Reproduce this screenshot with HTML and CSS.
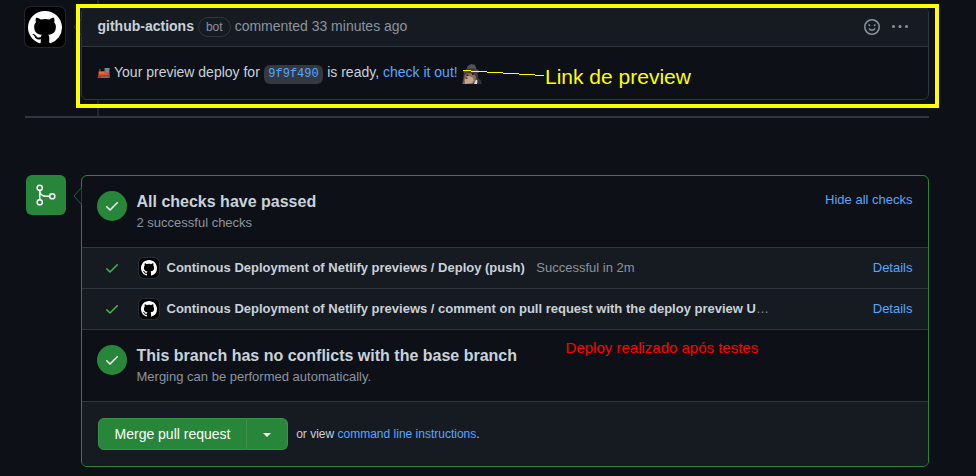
FILE: index.html
```html
<!DOCTYPE html>
<html lang="en">
<head>
<meta charset="utf-8">
<title>Pull request</title>
<link rel="stylesheet" href="styles.css">
</head>
<body>
<svg class="defs" width="0" height="0">
  <symbol id="mark" viewBox="0 0 16 16"><path fill="#fff" d="M8 0C3.58 0 0 3.58 0 8c0 3.54 2.29 6.53 5.47 7.59.4.07.55-.17.55-.38 0-.19-.01-.82-.01-1.49-2.01.37-2.53-.49-2.69-.94-.09-.23-.48-.94-.82-1.13-.28-.15-.68-.52-.01-.53.63-.01 1.08.58 1.23.82.72 1.21 1.87.87 2.33.66.07-.52.28-.87.51-1.07-1.78-.2-3.64-.89-3.64-3.95 0-.87.31-1.59.82-2.15-.08-.2-.36-1.02.08-2.12 0 0 .67-.21 2.2.82.64-.18 1.32-.27 2-.27.68 0 1.36.09 2 .27 1.53-1.04 2.2-.82 2.2-.82.44 1.1.16 1.92.08 2.12.51.56.82 1.27.82 2.15 0 3.07-1.87 3.75-3.65 3.95.29.25.54.73.54 1.48 0 1.07-.01 1.93-.01 2.2 0 .21.15.46.55.38A8.013 8.013 0 0016 8c0-4.42-3.58-8-8-8z"/></symbol>
  <symbol id="check" viewBox="0 0 16 16"><path fill="currentColor" d="M13.78 4.22a.75.75 0 010 1.06l-7.25 7.25a.75.75 0 01-1.06 0L2.22 9.28a.75.75 0 011.06-1.06L6 10.94l6.72-6.72a.75.75 0 011.06 0z"/></symbol>
</svg>
<main class="page">
  <section class="timeline">
    <div class="avatar"><svg width="34" height="33" viewBox="0 0 16 16" preserveAspectRatio="none"><use href="#mark" width="16" height="16"/></svg></div>
    <article class="comment">
      <svg class="caret caret-gray" width="9" height="18" viewBox="0 0 9 18"><path d="M8.500 .5L1 9l7.500 8.500" /></svg>
      <header class="comment-head">
        <strong class="author">github-actions</strong>
        <span class="bot">bot</span>
        <span class="when">commented 33 minutes ago</span>
        <svg class="smile" width="16" height="16" viewBox="0 0 16 16" fill="none" stroke="#8b949e" stroke-width="1.500" stroke-linecap="round"><circle cx="8" cy="8" r="7.250"/><path d="M5.300 9.800c1.200 1.900 4.200 1.900 5.400 0"/><circle cx="5.300" cy="6.200" r="1" fill="#8b949e" stroke="none"/><circle cx="10.700" cy="6.200" r="1" fill="#8b949e" stroke="none"/></svg>
        <svg class="dots" width="16" height="16" viewBox="0 0 16 16" fill="#8b949e"><circle cx="1.500" cy="7.500" r="1.500"/><circle cx="8" cy="7.500" r="1.500"/><circle cx="14.500" cy="7.500" r="1.500"/></svg>
      </header>
      <div class="comment-body">
        <svg class="train" width="14" height="14" viewBox="0 0 14 14">
          <path fill="#8d8a89" d="M7.500 2h5.200v1.200H7.500z"/>
          <path fill="#5a3a35" d="M2 3h1.800v2.500H2z"/>
          <path fill="#d94e2b" d="M1.500 5.300h6V3h5v7h-11z"/>
          <path fill="#5d91b5" d="M8.800 3.400h3.200v3H8.800z"/>
          <path fill="#ee6a38" d="M2 5.800h5.500v2H2z"/>
          <path fill="#b8402c" d="M.3 12l1.400-2.800h11.100V12z"/>
          <g fill="#55494b"><circle cx="4.500" cy="11" r="1.200"/><circle cx="7.500" cy="11" r="1.200"/><circle cx="10.800" cy="10.800" r="1.400"/></g>
          <path fill="#c49a82" d="M4 10.800h8v.6H4z"/>
        </svg>
        <p class="message">Your preview deploy for <code>9f9f490</code> is ready, <a>check it out!</a></p>
        <svg class="detective" width="20" height="20" viewBox="0 0 20 20">
          <path fill="#2b303b" d="M13 12l3 1.500 3 3 1 3.500H9z"/>
          <path fill="#4a3b34" d="M2 8h13l1 4-1 4-4 4H0l1-5z"/>
          <path fill="#8b6e5a" d="M3 10.500l3-1.500 6 1 2 3-1 5-3 2H1l1-5z"/>
          <path fill="#c3a68f" d="M3 14l3-2 4 1 2 3-2 3-7 1z"/>
          <path fill="#2c2423" d="M4.500 10.500h1.800v1.500H4.500zM10 9h2v2h-2zM3.500 13.500h2v1.200h-2z"/>
          <path fill="#dcdadb" d="M14 15.500l1.500 1-.5 3.500h-3z"/>
          <path fill="#53544f" d="M4.500 5L6 1.700 9.500 0l3.500 1 1.500 4 3.500 2.500-2 1.500-4-1.500L7 7.500 2 9 1 7.500z"/>
          <path fill="#393a38" d="M4.500 4.500l10 .3v1.500L4 6.500z"/>
        </svg>
      </div>
    </article>
    <div class="stem stem-top"></div>
    <div class="stem stem-bottom"></div>
  </section>

  <section class="merge">
    <div class="merge-icon">
      <svg width="24" height="24" viewBox="0 0 24 24" fill="none" stroke="#fff" stroke-width="1.500"><circle cx="5.750" cy="4.750" r="2.600"/><circle cx="5.750" cy="19.250" r="2.600"/><circle cx="18.250" cy="13.250" r="2.600"/><path d="M5.750 7.300v9.400M5.750 7.300c0 3.500 2.800 5.950 6.500 5.950h3.400"/></svg>
    </div>
    <div class="box">
      <svg class="caret caret-green" width="9" height="18" viewBox="0 0 9 18"><path d="M8.500 .5L1 9l7.500 8.500"/></svg>
      <div class="status">
        <span class="badge"><svg width="16" height="16"><use href="#check"/></svg></span>
        <div class="status-text"><h3>All checks have passed</h3><p>2 successful checks</p></div>
        <a class="toggle">Hide all checks</a>
      </div>
      <div class="check-row">
        <svg class="tick" width="16" height="16"><use href="#check"/></svg>
        <span class="mini"><svg width="16" height="16"><use href="#mark"/></svg></span>
        <div class="check-name"><strong>Continous Deployment of Netlify previews / Deploy (push)</strong><span class="result">Successful in 2m</span></div>
        <a>Details</a>
      </div>
      <div class="check-row">
        <svg class="tick" width="16" height="16"><use href="#check"/></svg>
        <span class="mini"><svg width="16" height="16"><use href="#mark"/></svg></span>
        <div class="check-name"><strong>Continous Deployment of Netlify previews / comment on pull request with the deploy preview U</strong>…</div>
        <a>Details</a>
      </div>
      <div class="status">
        <span class="badge"><svg width="16" height="16"><use href="#check"/></svg></span>
        <div class="status-text"><h3>This branch has no conflicts with the base branch</h3><p>Merging can be performed automatically.</p></div>
      </div>
      <footer class="actions">
        <div class="buttons"><button class="merge-btn">Merge pull request</button><button class="more-btn" aria-label="Options"><span class="arrow"></span></button></div>
        <p>or view <a>command line instructions</a>.</p>
      </footer>
    </div>
  </section>

  <div class="frame"></div>
  <svg class="pointer" width="84" height="8" viewBox="0 0 84 8"><path shape-rendering="crispEdges" d="M1 1.500h8M9 2.500h16M25 3.500h16M41 4.500h16M57 5.500h16M73 6.500h9" stroke="#ff0"/></svg>
  <div class="note note-yellow">Link de preview</div>
  <div class="note note-red">Deploy realizado após testes</div>
</main>
</body>
</html>
```
FILE: styles.css
```css
* { box-sizing: border-box; }
body {
  margin: 0;
  background: #0d1117;
  color: #c9d1d9;
  font: 14px/20px "Liberation Sans", Arial, sans-serif;
}
h3, p { margin: 0; }
a { color: #58a6ff; }
svg { display: block; flex: none; }
.defs { position: absolute; }
.page { position: relative; width: 976px; height: 476px; overflow: hidden; }

.timeline {
  position: relative;
  display: flex;
  align-items: flex-start;
  margin: 0 47px 0 25px;
  height: 118px;
  padding-top: 7px;
  border-bottom: 2px solid #30363d;
}
.avatar {
  display: grid;
  place-items: center;
  width: 40px;
  height: 40px;
  margin-right: 16px;
  border-radius: 6px;
  background: #000;
  box-shadow: 0 0 0 1px #22262c;
}
.comment {
  position: relative;
  flex: 1;
  height: 93px;
  border: 1px solid #30363d;
  border-radius: 6px;
}
.comment-head {
  display: flex;
  align-items: center;
  height: 39px;
  padding: 0 20px 2px 15.500px;
  border-bottom: 1px solid #30363d;
  border-radius: 5px 5px 0 0;
  background: #161b22;
}
.bot {
  height: 20px;
  margin: 2px 4px 0;
  padding: 0 7px;
  border: 1px solid #30363d;
  border-radius: 10px;
  color: #8b949e;
  font-size: 12px;
  line-height: 18px;
}
.when { flex: 1; color: #8b949e; }
.smile { margin-top: 2px; }
.dots { margin: 1px 0 0 12px; }
.comment-body { display: flex; align-items: center; height: 52px; padding: 0 0 2px 15px; }
.message { margin: 0 4.500px 0 3px; white-space: pre; }
.train { margin-top: 1px; }
code {
  padding: 2px 4.600px 3px;
  border-radius: 6px;
  background: #343941;
  color: #58a6ff;
  font: 12px "Liberation Mono", monospace;
}
.detective { margin-top: 4px; }
.stem { position: absolute; left: 72px; width: 2px; background: #21262d; }
.stem-top { top: 0; height: 4px; }
.stem-bottom { top: 100px; height: 16px; }
.caret { position: absolute; left: -9px; fill: #0d1117; }
.caret-gray { top: 10px; stroke: #30363d; fill: #161b22; }
.caret-green { top: 11px; stroke: #1d6430; }

.merge { display: flex; align-items: flex-start; margin: 57px 47px 0 26px; }
.merge-icon {
  display: grid;
  place-items: center;
  width: 40px;
  height: 40px;
  margin-right: 15px;
  border-radius: 6px;
  background: #28863b;
}
.box { position: relative; flex: 1; border: 1px solid #28863b; border-radius: 6px; }
.status { display: flex; height: 72px; padding: 15px 15.500px 0 15px; border-bottom: 1px solid #30363d; }
.badge {
  display: grid;
  place-items: center;
  width: 30px;
  height: 30px;
  margin-right: 9.500px;
  border-radius: 50%;
  background: #28863b;
  color: #fff;
}
.status-text { flex: 1; }
.status-text h3 { font-size: 16px; line-height: 21px; }
.status-text p { font-size: 13px; line-height: 21px; color: #8b949e; }
.toggle { font-size: 13px; line-height: 18px; }
.check-row {
  display: flex;
  align-items: center;
  height: 41px;
  padding: 0 15.500px 0 22px;
  border-bottom: 1px solid #30363d;
  background: #161b22;
  font-size: 13px;
}
.tick { color: #3fb950; }
.mini {
  display: grid;
  place-items: center;
  width: 20px;
  height: 20px;
  margin: 0 7.500px 0 19px;
  border-radius: 5px;
  background: #000;
  box-shadow: 0 0 0 1px #282d34;
}
.check-name { flex: 1; color: #8b949e; }
.check-name strong { color: #c9d1d9; }
.result { margin-left: 11.500px; }
.actions {
  display: flex;
  align-items: center;
  height: 64px;
  padding-left: 16px;
  border-radius: 0 0 5px 5px;
  background: #161b22;
  font-size: 12px;
}
.buttons { display: flex; margin-right: 8.200px; }
button {
  height: 32px;
  margin: 0;
  padding: 0;
  border: 1px solid #3a9149;
  background: #28863b;
  color: #fff;
  font: 14px "Liberation Sans", Arial, sans-serif;
}
.merge-btn { width: 149px; border-radius: 6px 0 0 6px; }
.more-btn { display: grid; place-items: center; width: 41px; border-left: 0; border-radius: 0 6px 6px 0; }
.arrow { margin-top: 1px; border: 4px solid transparent; border-top-color: #fff; border-bottom: 0; }

.frame { position: absolute; left: 76px; top: 4px; width: 863px; height: 104px; border: 4px solid #ff0; }
.pointer { position: absolute; left: 462px; top: 69px; }
.note { position: absolute; white-space: nowrap; }
.note-yellow { left: 545px; top: 65px; color: #ff0; font-size: 21px; line-height: 24px; }
.note-red { left: 565.600px; top: 338px; color: #f00; font-size: 15px; }
```
